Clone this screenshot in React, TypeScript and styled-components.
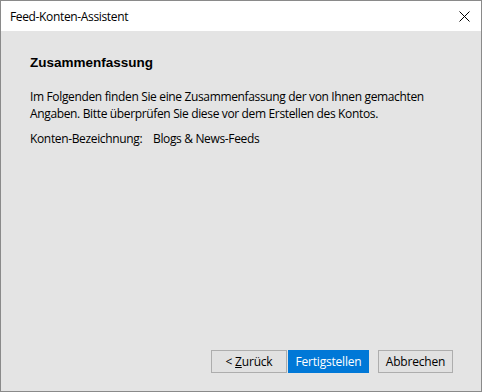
import styled, { createGlobalStyle } from 'styled-components'

const Global = createGlobalStyle`
  html, body {
    margin: 0;
    padding: 0;
    background: #fff;
  }
  * {
    box-sizing: border-box;
  }
`

const Window = styled.div`
  width: 482px;
  height: 392px;
  display: flex;
  flex-direction: column;
  border: 1px solid #8a8a8a;
  font-family: "Open Sans", "Noto Sans", sans-serif;
  font-size: 12px;
  letter-spacing: -0.35px;
  color: #000;
`

const TitleBar = styled.div`
  height: 30px;
  background: #fff;
  display: flex;
  align-items: center;
  justify-content: space-between;
  padding: 0 9px 0 9px;
`

const Title = styled.div`
  font-size: 12px;
  color: #000;
`

const CloseButton = styled.div`
  width: 14px;
  height: 14px;
  display: flex;
  align-items: center;
  justify-content: center;
  margin-right: 1px;
`

const Body = styled.div`
  flex: 1;
  background: #e4e4e4;
  display: flex;
  flex-direction: column;
  padding: 22px 28px 18px 29px;
`

const Heading = styled.div`
  font-family: "Liberation Sans", Arial, sans-serif;
  font-size: 13.5px;
  font-weight: 700;
  letter-spacing: 0;
  line-height: 20px;
  margin-bottom: 15px;
`

const Text = styled.p`
  margin: 0 0 8px 0;
  line-height: 17px;
  max-width: 420px;
`

const Field = styled.div`
  display: flex;
  line-height: 17px;
`

const Label = styled.span`
  width: 123px;
`

const Footer = styled.div`
  margin-top: auto;
  display: flex;
  justify-content: flex-end;
`

const Button = styled.button<{ $primary?: boolean; $gap?: number; $width: number }>`
  height: 23px;
  width: ${p => p.$width}px;
  padding: 0;
  margin-left: ${p => p.$gap ?? 0}px;
  font-family: inherit;
  font-size: 12px;
  letter-spacing: -0.2px;
  border: 1px solid ${p => (p.$primary ? '#0078d7' : '#adadad')};
  background: ${p => (p.$primary ? '#0078d7' : '#e1e1e1')};
  color: ${p => (p.$primary ? '#fff' : '#000')};
`

export default () => {
  return (
    <>
      <Global />
      <Window>
        <TitleBar>
          <Title>Feed-Konten-Assistent</Title>
          <CloseButton>
            <svg width="11" height="11" viewBox="0 0 11 11">
              <path d="M0.5 0.5 L10.5 10.5 M10.5 0.5 L0.5 10.5" stroke="#000" strokeWidth="1" />
            </svg>
          </CloseButton>
        </TitleBar>
        <Body>
          <Heading>Zusammenfassung</Heading>
          <Text>
            Im Folgenden finden Sie eine Zusammenfassung der von Ihnen gemachten Angaben. Bitte
            überprüfen Sie diese vor dem Erstellen des Kontos.
          </Text>
          <Field>
            <Label>Konten-Bezeichnung:</Label>
            <span>Blogs &amp; News-Feeds</span>
          </Field>
          <Footer>
            <Button $width={76}>
              &lt; <u>Z</u>urück
            </Button>
            <Button $primary $gap={1} $width={81}>
              Fertigstellen
            </Button>
            <Button $gap={9} $width={75}>
              Abbrechen
            </Button>
          </Footer>
        </Body>
      </Window>
    </>
  )
}
